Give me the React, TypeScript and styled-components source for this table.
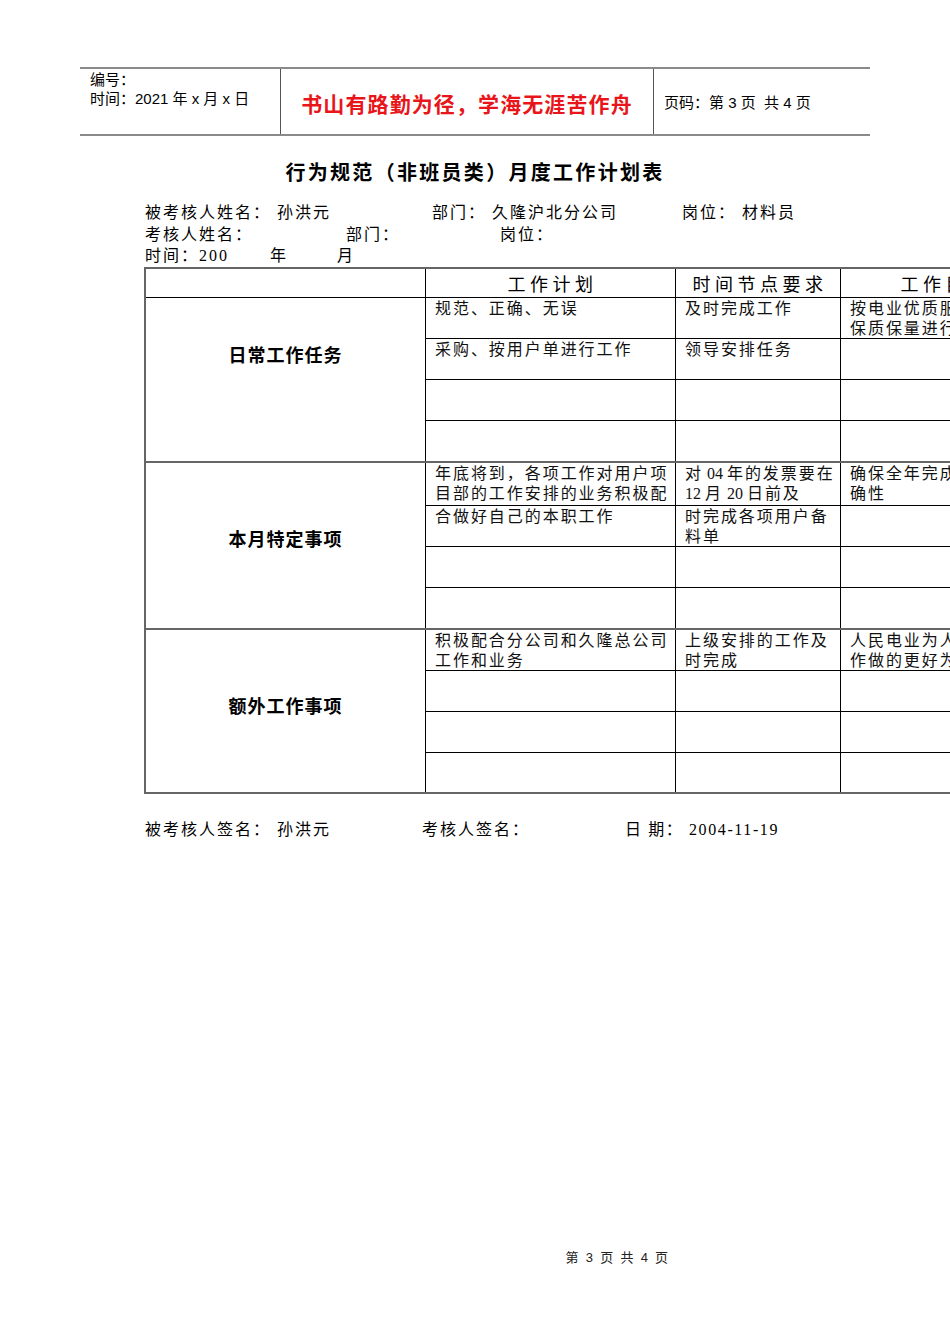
import React from "react";
import styled, { createGlobalStyle } from "styled-components";

const Global = createGlobalStyle`
  html, body { margin: 0; padding: 0; background: #fff; }
  body { overflow: hidden; }
  * { box-sizing: border-box; }
`;

const CJK = `"Noto Sans CJK SC", sans-serif`;
const SERIF = `"Liberation Serif", "Noto Sans CJK SC", serif`;

const Page = styled.div`
  width: 950px;
  height: 1344px;
  overflow: hidden;
  display: flex;
  flex-direction: column;
  font-family: ${CJK};
  color: #000;
`;

const HeaderBar = styled.div`
  margin: 67px 0 0 80px;
  width: 790px;
  height: 69px;
  display: grid;
  grid-template-columns: 201px 373px 216px;
  border-top: 2px solid #8a8a8a;
  border-bottom: 2px solid #8a8a8a;
`;

const HeaderCell = styled.div<{ $divider?: boolean }>`
  border-right: ${(p) => (p.$divider ? "1.5px solid #555" : "none")};
  font-family: "Liberation Sans", ${CJK};
  font-size: 15px;
  line-height: 19px;
`;

const MetaCell = styled(HeaderCell)`
  padding: 1px 0 0 10px;
`;

const Motto = styled(HeaderCell)`
  display: flex;
  justify-content: center;
  align-items: center;
  padding-top: 5px;
  color: #e8161b;
  font-size: 21px;
  font-weight: 700;
  letter-spacing: 1.1px;
`;

const PageNo = styled(HeaderCell)`
  display: flex;
  align-items: center;
  padding: 2px 0 0 10px;
`;

const Title = styled.h1`
  margin: 23px 0 0 0;
  text-align: center;
  font-family: ${CJK};
  font-size: 20px;
  font-weight: 700;
  letter-spacing: 2.3px;
  line-height: 26px;
`;

const InfoBlock = styled.div`
  margin: 17px 0 0 145px;
  display: flex;
  flex-direction: column;
  font-family: ${SERIF};
  font-size: 16px;
  line-height: 21.5px;
  letter-spacing: 2px;
`;

const InfoLine = styled.div`
  display: flex;
  white-space: pre;
`;

const Field = styled.span<{ $w?: number; $wide?: boolean }>`
  flex: 0 0 ${(p) => (p.$w ? `${p.$w}px` : "auto")};
  letter-spacing: ${(p) => (p.$wide ? "1.6px" : "inherit")};
`;

const Table = styled.div`
  margin: 0 0 0 144px;
  width: 903px;
  border-top: 2px solid #666;
  border-left: 2px solid #666;
  display: flex;
  flex-direction: column;
`;

const HeadRow = styled.div`
  display: grid;
  grid-template-columns: 280px 250px 165px 206px;
  height: 29px;
  border-bottom: 1px solid #000;
`;

const HeadCell = styled.div`
  border-right: 1px solid #000;
  display: flex;
  justify-content: center;
  align-items: center;
  font-family: ${SERIF};
  font-size: 18px;
  letter-spacing: 4.5px;
  padding-left: 4px;
`;

const Group = styled.div`
  display: flex;
  border-bottom: 2px solid #666;
`;

const LabelCell = styled.div<{ $raise: number }>`
  flex: 0 0 280px;
  border-right: 1px solid #000;
  display: flex;
  justify-content: center;
  align-items: center;
  padding-bottom: ${(p) => p.$raise}px;
  font-family: ${CJK};
  font-size: 18px;
  font-weight: 700;
  letter-spacing: 1px;
`;

const Rows = styled.div`
  display: flex;
  flex-direction: column;
`;

const Row = styled.div<{ $h: number; $last?: boolean }>`
  display: grid;
  grid-template-columns: 250px 165px 206px;
  height: ${(p) => p.$h}px;
  border-bottom: ${(p) => (p.$last ? "none" : "1px solid #000")};
`;

const Cell = styled.div`
  border-right: 1px solid #000;
  padding: 1px 0 0 9px;
  font-family: ${SERIF};
  font-size: 16px;
  line-height: 20px;
  letter-spacing: 1.95px;
  white-space: pre;
  overflow: hidden;
  color: #111;
`;

const Line = styled.div``;

const Num = styled.span`
  letter-spacing: 0;
`;

const SignLine = styled.div`
  margin: 25px 0 0 145px;
  display: flex;
  white-space: pre;
  font-family: ${SERIF};
  font-size: 16px;
  line-height: 22px;
  letter-spacing: 2px;
`;

const Footer = styled.div`
  margin-top: auto;
  margin-bottom: 78px;
  padding-left: 284px;
  text-align: center;
  font-family: "Liberation Sans", ${CJK};
  font-size: 13px;
  color: #222;
  letter-spacing: 0.3px;
  word-spacing: 3px;
`;

type GroupData = {
  label: string;
  raise: number;
  heights: number[];
  rows: string[][][];
};

const groups: GroupData[] = [
  {
    label: "日常工作任务",
    raise: 50,
    heights: [41, 41, 41, 40],
    rows: [
      [["规范、正确、无误"], ["及时完成工作"], ["按电业优质服务要求", "保质保量进行工作"]],
      [["采购、按用户单进行工作"], ["领导安排任务"], []],
      [[], [], []],
      [[], [], []],
    ],
  },
  {
    label: "本月特定事项",
    raise: 14,
    heights: [43, 41, 41, 40],
    rows: [
      [
        ["年底将到，各项工作对用户项", "目部的工作安排的业务积极配"],
        ["对 04 年的发票要在", "12 月 20 日前及"],
        ["确保全年完成的准", "确性"],
      ],
      [["合做好自己的本职工作"], ["时完成各项用户备", "料单"], []],
      [[], [], []],
      [[], [], []],
    ],
  },
  {
    label: "额外工作事项",
    raise: 12,
    heights: [41, 41, 41, 39],
    rows: [
      [
        ["积极配合分公司和久隆总公司", "工作和业务"],
        ["上级安排的工作及", "时完成"],
        ["人民电业为人民，", "作做的更好为"],
      ],
      [[], [], []],
      [[], [], []],
      [[], [], []],
    ],
  },
];

function renderText(t: string) {
  return t.split(/(\s?\d+\s?)/).map((part, i) =>
    /\d/.test(part) ? <Num key={i}>{part}</Num> : <React.Fragment key={i}>{part}</React.Fragment>
  );
}

export default function App() {
  return (
    <>
      <Global />
      <Page>
        <HeaderBar>
          <MetaCell $divider>
            <div>编号：</div>
            <div>时间：2021 年 x 月 x 日</div>
          </MetaCell>
          <Motto $divider>书山有路勤为径，学海无涯苦作舟</Motto>
          <PageNo>页码：第 3 页&nbsp; 共 4 页</PageNo>
        </HeaderBar>

        <Title>行为规范（非班员类）月度工作计划表</Title>

        <InfoBlock>
          <InfoLine>
            <Field $w={287}>被考核人姓名： 孙洪元</Field>
            <Field $w={250}>部门： 久隆沪北分公司</Field>
            <Field>岗位： 材料员</Field>
          </InfoLine>
          <InfoLine>
            <Field $w={201}>考核人姓名：</Field>
            <Field $w={154}>部门：</Field>
            <Field>岗位：</Field>
          </InfoLine>
          <InfoLine>
            <Field $w={125}>时间：200</Field>
            <Field $w={67}>年</Field>
            <Field>月</Field>
          </InfoLine>
        </InfoBlock>

        <Table>
          <HeadRow>
            <HeadCell />
            <HeadCell>工作计划</HeadCell>
            <HeadCell>时间节点要求</HeadCell>
            <HeadCell>工作目标</HeadCell>
          </HeadRow>
          {groups.map((g) => (
            <Group key={g.label}>
              <LabelCell $raise={g.raise}>{g.label}</LabelCell>
              <Rows>
                {g.rows.map((r, i) => (
                  <Row key={i} $h={g.heights[i]} $last={i === g.rows.length - 1}>
                    {r.map((c, j) => (
                      <Cell key={j}>
                        {c.map((t, k) => (
                          <Line key={k}>{renderText(t)}</Line>
                        ))}
                      </Cell>
                    ))}
                  </Row>
                ))}
              </Rows>
            </Group>
          ))}
        </Table>

        <SignLine>
          <Field $w={277}>被考核人签名： 孙洪元</Field>
          <Field $w={203}>考核人签名：</Field>
          <Field $wide>日 期： 2004-11-19</Field>
        </SignLine>

        <Footer>第 3 页 共 4 页</Footer>
      </Page>
    </>
  );
}
